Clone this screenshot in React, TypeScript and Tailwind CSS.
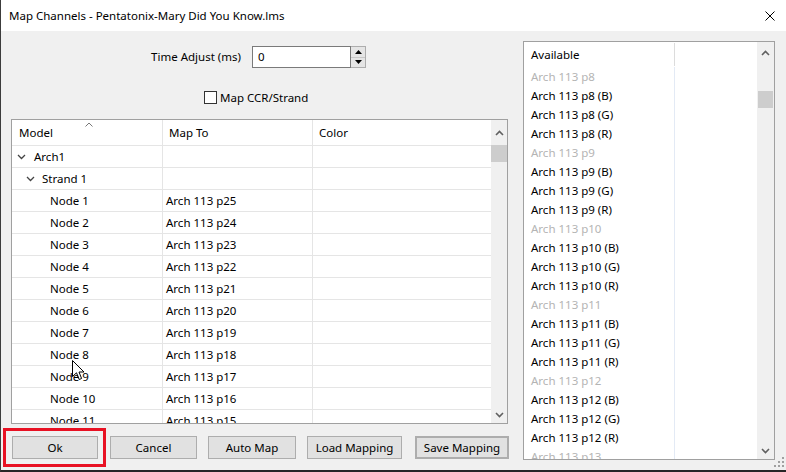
import React from 'react';

type TreeRow = { label: string; level: 0 | 1 | 2; map: string };

const treeRows: TreeRow[] = [
  { label: 'Arch1', level: 0, map: '' },
  { label: 'Strand 1', level: 1, map: '' },
  ...Array.from({ length: 11 }, (_, i) => ({
    label: `Node ${i + 1}`,
    level: 2 as const,
    map: `Arch 113 p${25 - i}`,
  })),
];

const available: { text: string; dim?: boolean }[] = [];
for (let p = 8; p <= 12; p++) {
  available.push({ text: `Arch 113 p${p}`, dim: true });
  available.push({ text: `Arch 113 p${p} (B)` });
  available.push({ text: `Arch 113 p${p} (G)` });
  available.push({ text: `Arch 113 p${p} (R)` });
}
available.push({ text: 'Arch 113 p13', dim: true });

const Chevron = ({ up = false }: { up?: boolean }) => (
  <svg width="9" height="6" viewBox="0 0 9 6">
    <path
      d={up ? 'M1 5 L4.5 1.5 L8 5' : 'M1 1 L4.5 4.5 L8 1'}
      fill="none"
      stroke="#606060"
      strokeWidth="1.6"
    />
  </svg>
);

const TreeChevron = () => (
  <svg width="9" height="6" viewBox="0 0 9 6">
    <path d="M1 1 L4.5 4.5 L8 1" fill="none" stroke="#444" strokeWidth="1.3" />
  </svg>
);

const Button = ({ label, className = '' }: { label: string; className?: string }) => (
  <button
    className={`h-[23px] bg-[#e1e1e1] border border-[#adadad] text-[11.5px] text-black flex items-center justify-center ${className}`}
  >
    {label}
  </button>
);

export default function App() {
  return (
    <div className="relative w-[786px] h-[472px] bg-[#f0f0f0] border-l border-[#3c3c3c] border-b-2 border-b-[#262626] overflow-hidden font-['Noto_Sans',sans-serif] text-[11.5px] text-black leading-none">
      {/* Title bar */}
      <div className="h-[31px] bg-white flex items-center pl-[8px]">
        <span>Map Channels - Pentatonix-Mary Did You Know.lms</span>
        <svg className="ml-auto mr-[11px]" width="10" height="10" viewBox="0 0 10 10">
          <path d="M0.5 0.5 L9.5 9.5 M9.5 0.5 L0.5 9.5" stroke="#000" strokeWidth="1" />
        </svg>
      </div>

      <div className="flex">
        {/* Left side */}
        <div className="w-[522px] flex flex-col">
          {/* Time adjust */}
          <div className="mt-[15px] h-[22px] flex items-center">
            <span className="w-[240px] text-right">Time Adjust (ms)</span>
            <div className="ml-[11px] flex h-[22px]">
              <div className="w-[99px] h-[22px] bg-white border border-[#7a7a7a] flex items-center pl-[5px]">0</div>
              <div className="w-[15px] h-[22px] flex flex-col border border-l-0 border-[#adadad] bg-[#f0f0f0]">
                <div className="flex-1 bg-[#e5e5e5] border-b border-[#c8c8c8] flex items-center justify-center">
                  <svg width="7" height="4" viewBox="0 0 7 4"><path d="M0 4 L3.5 0 L7 4 Z" fill="#000" /></svg>
                </div>
                <div className="flex-1 bg-[#e5e5e5] flex items-center justify-center">
                  <svg width="7" height="4" viewBox="0 0 7 4"><path d="M0 0 L3.5 4 L7 0 Z" fill="#000" /></svg>
                </div>
              </div>
            </div>
          </div>

          {/* Checkbox */}
          <div className="mt-[23px] h-[13px] flex items-center pl-[203px]">
            <div className="w-[13px] h-[13px] bg-white border border-[#333]" />
            <span className="ml-[3px]">Map CCR/Strand</span>
          </div>

          {/* Grid */}
          <div className="mt-[15px] ml-[10px] w-[497px] h-[305px] bg-white border border-[#a0a0a0] flex">
            <div className="w-[479px] overflow-hidden">
              <div className="h-[26px] flex border-b border-[#e5e5e5] relative">
                <div className="w-[151px] border-r border-[#e5e5e5] flex items-center pl-[7px]">Model</div>
                <div className="w-[150px] border-r border-[#e5e5e5] flex items-center pl-[6px]">Map To</div>
                <div className="flex-1 flex items-center pl-[6px]">Color</div>
                <svg className="absolute left-[73px] top-[2px]" width="8" height="5" viewBox="0 0 8 5">
                  <path d="M0.5 4.5 L4 1 L7.5 4.5" fill="none" stroke="#777" strokeWidth="1" />
                </svg>
              </div>
              {treeRows.map((r) => (
                <div key={r.label} className="h-[22px] flex border-b border-[#e5e5e5]">
                  <div className="w-[151px] border-r border-[#e5e5e5] flex items-center">
                    {r.level === 0 && (
                      <>
                        <span className="ml-[5px] w-[9px] flex"><TreeChevron /></span>
                        <span className="ml-[8px]">{r.label}</span>
                      </>
                    )}
                    {r.level === 1 && (
                      <>
                        <span className="ml-[14px] w-[9px] flex"><TreeChevron /></span>
                        <span className="ml-[7px]">{r.label}</span>
                      </>
                    )}
                    {r.level === 2 && <span className="ml-[38px]">{r.label}</span>}
                  </div>
                  <div className="w-[150px] border-r border-[#e5e5e5] flex items-center pl-[3px]">{r.map}</div>
                  <div className="flex-1" />
                </div>
              ))}
            </div>
            <div className="w-[16px] bg-[#f0f0f0] flex flex-col items-center">
              <div className="h-[25px] flex items-center justify-center"><Chevron up /></div>
              <div className="w-[16px] h-[17px] bg-[#cdcdcd]" />
              <div className="flex-1" />
              <div className="h-[17px] flex items-center justify-center"><Chevron /></div>
            </div>
          </div>

          {/* Buttons */}
          <div className="mt-[12px] flex pl-[11px]">
            <Button label="Ok" className="w-[86px]" />
            <Button label="Cancel" className="w-[87px] ml-[12px]" />
            <Button label="Auto Map" className="w-[88px] ml-[11px]" />
            <Button label="Load Mapping" className="w-[95px] ml-[11px]" />
            <Button label="Save Mapping" className="w-[94px] ml-[13px] border-2 border-[#0078d7]" />
          </div>
        </div>

        {/* Available list */}
        <div className="mt-[10px] w-[252px] h-[419px] bg-white border border-[#a0a0a0] flex">
          <div className="w-[233px] overflow-hidden relative">
            <div className="h-[25px] flex">
              <div className="w-[150px] flex items-center pl-[7px]">Available</div>
              <div className="w-px bg-[#dcdcdc] mt-[1px] mb-[1px]" />
            </div>
            <div className="absolute left-[150px] top-[25px] bottom-0 w-px bg-[#e3eaf5]" />
            {available.map((a) => (
              <div
                key={a.text}
                className={`h-[19px] flex items-center pl-[7px] ${a.dim ? 'text-[#b4b4b4]' : 'text-black'}`}
              >
                {a.text}
              </div>
            ))}
          </div>
          <div className="w-[17px] bg-[#f0f0f0] flex flex-col items-center">
            <div className="h-[21px] flex items-center justify-center"><Chevron up /></div>
            <div className="mt-[28px] w-[15px] h-[17px] bg-[#cdcdcd]" />
            <div className="flex-1" />
            <div className="h-[17px] flex items-center justify-center"><Chevron /></div>
          </div>
        </div>
      </div>

      {/* Red highlight annotation around Ok */}
      <div className="absolute left-[2px] top-[428px] w-[103px] h-[39px] border-[3px] border-[#e81123]" />

      {/* Mouse cursor */}
      <svg className="absolute left-[71px] top-[360px]" width="13" height="21" viewBox="0 0 13 21">
        <path
          d="M0.5 0.5 L0.5 16.5 L4.5 12.8 L7.2 19.5 L9.6 18.5 L7 12 L12 12 Z"
          fill="#fff"
          fillOpacity="0.6"
          stroke="#000"
          strokeWidth="1"
        />
      </svg>

      {/* Resize grip */}
      <svg className="absolute right-[2px] bottom-[3px]" width="11" height="11" viewBox="0 0 11 11">
        {[
          [9, 1], [9, 5], [5, 5], [9, 9], [5, 9], [1, 9],
        ].map(([x, y]) => (
          <rect key={`${x}-${y}`} x={x} y={y} width="2" height="2" fill="#a0a0a0" />
        ))}
      </svg>
    </div>
  );
}
